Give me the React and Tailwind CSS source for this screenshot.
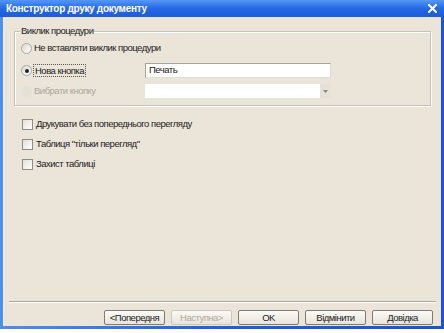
import React from "react";

function Radio({ checked, disabled }) {
  return (
    <span
      className={
        "inline-flex items-center justify-center w-[11px] h-[11px] rounded-full shrink-0 " +
        (disabled
          ? "bg-[#e4e1d8] border border-[#e4e1d8]"
          : "bg-gradient-to-br from-[#dcd9d0] to-white border border-[#a7a69f]")
      }
    >
      {checked && <span className="w-[4px] h-[4px] rounded-full bg-[#222]" />}
    </span>
  );
}

function Check() {
  return (
    <span className="inline-block w-[11px] h-[11px] shrink-0 border border-[#8c8d88] bg-gradient-to-br from-[#e2dfd6] to-white" />
  );
}

function Btn({ children, disabled }) {
  return (
    <div
      className={
        "w-[61px] h-[15px] rounded-[2px] border flex items-center justify-center leading-none bg-gradient-to-b from-[#fbfaf6] to-[#e8e4da] " +
        (disabled ? "border-[#c9c6bb] text-[#b0ab9c]" : "border-[#7d7b73] text-[#1b1b1b]")
      }
    >
      {children}
    </div>
  );
}

export default function App() {
  return (
    <div
      className="w-[444px] h-[333px] bg-white text-[9.5px] tracking-[-0.5px] text-[#1b1b1b]"
      style={{ fontFamily: '"Liberation Sans", "DejaVu Sans", sans-serif' }}
    >
      <div className="w-[444px] h-[329px] flex flex-col bg-gradient-to-r from-[#4d8ff0] via-[#1f5fd8] to-[#1a55cf]">
        {/* Title bar */}
        <div className="h-[17px] shrink-0 flex items-center justify-between pl-[6px] pr-[7px] bg-gradient-to-b from-[#5597f5] via-[#2567e4] to-[#1d5cd9]">
          <span className="text-white font-bold text-[10px] leading-none tracking-[-0.3px]">
            Конструктор друку документу
          </span>
          <svg width="9" height="9" viewBox="0 0 9 9">
            <path d="M1 1 L8 8 M8 1 L1 8" stroke="white" strokeWidth="2" strokeLinecap="square" />
          </svg>
        </div>

        {/* Body */}
        <div className="flex-1 mx-[3px] mb-[3px] bg-[#ebe4d9] flex flex-col border-l border-[#f4efe8]">
          {/* Group box */}
          <div className="relative mx-[10px] mt-[14px] h-[75px] border border-[#c8c2b5] shadow-[inset_1px_1px_0_#fff,1px_1px_0_#fff] pl-[6px] pt-[9px] flex flex-col">
            <span className="absolute left-[5px] top-[-7px] px-[1px] bg-[#ebe4d9] leading-[12px]">
              Виклик процедури
            </span>
            <div className="h-[14px] flex items-center gap-[2px]">
              <Radio />
              <span>Не вставляти виклик процедури</span>
            </div>
            <div className="mt-[8px] h-[15px] flex items-center">
              <div className="w-[124px] flex items-center gap-[1px]">
                <Radio checked />
                <span className="border border-dotted border-[#555] px-[1px] leading-[11px]">Нова кнопка</span>
              </div>
              <div className="w-[186px] h-[15px] bg-white border border-[#a4a49c] border-b-[#e0ddd4] border-r-[#e0ddd4] flex items-center pl-[3px]">
                Печать
              </div>
            </div>
            <div className="mt-[6px] h-[14px] flex items-center">
              <div className="w-[124px] flex items-center gap-[2px] text-[#aca899]">
                <Radio disabled />
                <span>Вибрати кнопку</span>
              </div>
              <div className="w-[186px] h-[14px] bg-white flex">
                <div className="flex-1" />
                <div className="w-[11px] bg-[#e5e1d8] flex items-center justify-center">
                  <svg width="5" height="3" viewBox="0 0 5 3">
                    <path d="M0 0 H5 L2.5 3 Z" fill="#8a877d" />
                  </svg>
                </div>
              </div>
            </div>
          </div>

          {/* Checkboxes */}
          <div className="mt-[12px] pl-[18px] flex flex-col gap-[8px]">
            <div className="h-[12px] flex items-center gap-[3px]">
              <Check />
              <span>Друкувати без попереднього перегляду</span>
            </div>
            <div className="h-[12px] flex items-center gap-[3px]">
              <Check />
              <span>Таблиця "тільки перегляд"</span>
            </div>
            <div className="h-[12px] flex items-center gap-[3px]">
              <Check />
              <span>Захист таблиці</span>
            </div>
          </div>

          <div className="flex-1" />

          {/* Separator */}
          <div className="mx-[5px] h-[2px] border-t border-[#aca79b] border-b border-b-white" />

          {/* Buttons */}
          <div className="mt-[7px] mb-[1px] pr-[8px] flex justify-end gap-[6px]">
            <Btn>&lt;Попередня</Btn>
            <Btn disabled>Наступна&gt;</Btn>
            <Btn>OK</Btn>
            <Btn>Відмінити</Btn>
            <Btn>Довідка</Btn>
          </div>
        </div>
      </div>
    </div>
  );
}
